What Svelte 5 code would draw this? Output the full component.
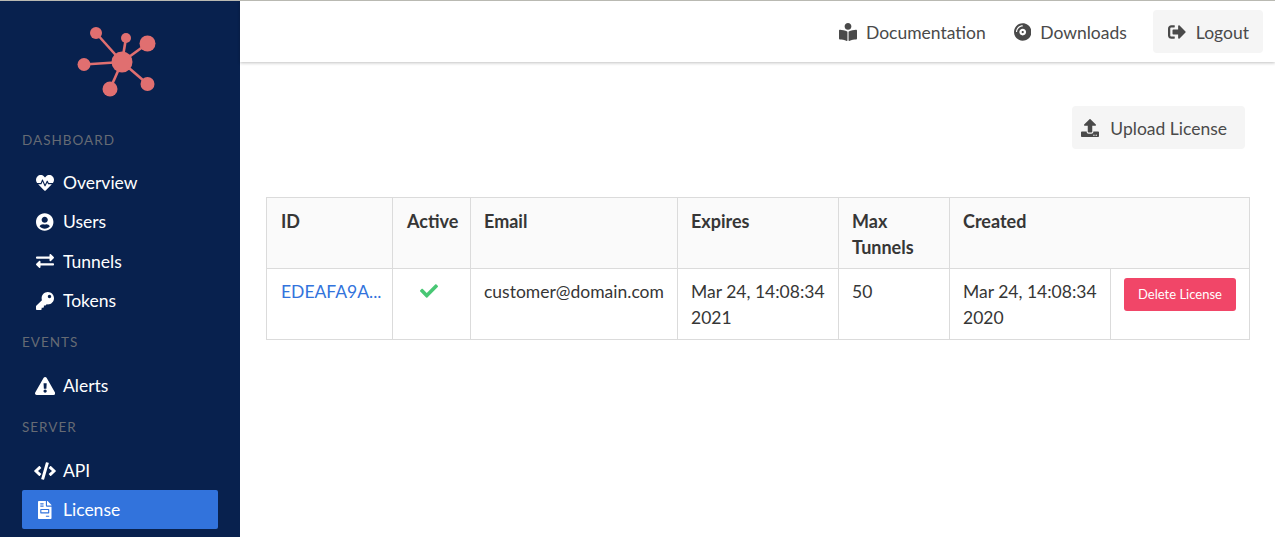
<script lang="ts">
	const icons = {
		heartbeat: [512, 'M320.2 243.8l-49.7 99.4c-6 12.1-23.4 11.7-28.9-.6l-56.9-126.3-30 71.7H60.6l182.5 186.5c7.1 7.3 18.6 7.3 25.7 0L451.4 288H342.3l-22.1-44.2zM473.7 73.9l-2.4-2.5c-51.5-52.6-135.8-52.6-187.4 0L256 100l-27.9-28.5c-51.5-52.7-135.9-52.7-187.4 0l-2.4 2.4C-10.4 123.7-12.5 203 31 256h102.4l35.9-86.2c5.4-12.9 23.6-13.2 29.4-.4l58.2 129.3 49-97.9c5.9-11.8 22.7-11.8 28.6 0l27.6 55.2H481c43.5-53 41.4-132.3-7.3-182.1z'],
		user: [496, 'M248 8C111 8 0 119 0 256s111 248 248 248 248-111 248-248S385 8 248 8zm0 96c48.6 0 88 39.4 88 88s-39.4 88-88 88-88-39.4-88-88 39.4-88 88-88zm0 344c-58.7 0-111.3-26.6-146.5-68.2 18.8-35.4 55.6-59.8 98.5-59.8 2.4 0 4.8.4 7.1 1.1 13 4.2 26.6 6.9 40.9 6.9 14.3 0 28-2.7 40.9-6.9 2.3-.7 4.7-1.1 7.1-1.1 42.9 0 79.7 24.4 98.5 59.8C359.3 421.4 306.7 448 248 448z'],
		exchange: [512, 'M0 168v-16c0-13.255 10.745-24 24-24h360V80c0-21.367 25.899-32.042 40.971-16.971l80 80c9.372 9.373 9.372 24.569 0 33.941l-80 80C409.956 271.982 384 261.456 384 240v-48H24c-13.255 0-24-10.745-24-24zm488 152H128v-48c0-21.314-25.862-32.08-40.971-16.971l-80 80c-9.372 9.373-9.372 24.569 0 33.941l80 80C102.057 463.997 128 453.437 128 432v-48h360c13.255 0 24-10.745 24-24v-16c0-13.255-10.745-24-24-24z'],
		key: [512, 'M512 176.001C512 273.203 433.202 352 336 352c-11.22 0-22.19-1.062-32.827-3.069l-24.012 27.014A23.999 23.999 0 0 1 261.223 384H224v40c0 13.255-10.745 24-24 24h-40v40c0 13.255-10.745 24-24 24H24c-13.255 0-24-10.745-24-24v-78.059c0-6.365 2.529-12.47 7.029-16.971l161.802-161.802C163.108 213.814 160 195.271 160 176 160 78.798 238.797.001 335.999 0 433.488-.001 512 78.511 512 176.001zM336 128c0 26.51 21.49 48 48 48s48-21.49 48-48-21.49-48-48-48-48 21.49-48 48z'],
		alert: [576, 'M569.517 440.013C587.975 472.007 564.806 512 527.94 512H48.054c-36.937 0-59.999-40.055-41.577-71.987L246.423 23.985c18.467-32.009 64.72-31.951 83.154 0l239.94 416.028zM288 354c-25.405 0-46 20.595-46 46s20.595 46 46 46 46-20.595 46-46-20.595-46-46-46zm-43.673-165.346l7.418 136c.347 6.364 5.609 11.346 11.982 11.346h48.546c6.373 0 11.635-4.982 11.982-11.346l7.418-136c.375-6.874-5.098-12.654-11.982-12.654h-63.383c-6.884 0-12.356 5.78-11.981 12.654z'],
		code: [640, 'M278.9 511.5l-61-17.7c-6.4-1.8-10-8.5-8.2-14.9L346.2 8.7c1.8-6.4 8.5-10.1 14.9-8.2l61 17.7c6.4 1.8 10 8.5 8.2 14.9L293.8 503.3c-1.9 6.4-8.5 10.1-14.9 8.2zm-114-112.2l43.5-46.4c4.6-4.9 4.3-12.7-.8-17.2L117 256l90.6-79.7c5.1-4.5 5.5-12.3.8-17.2l-43.5-46.4c-4.5-4.8-12.1-5.1-17-.5L3.8 247.2c-5.1 4.7-5.1 12.8 0 17.5l144.1 135.1c4.9 4.6 12.5 4.4 17-.5zm327.2.6l144.1-135.1c5.1-4.7 5.1-12.8 0-17.5L492.1 112.1c-4.8-4.5-12.4-4.3-17 .5L431.6 159c-4.6 4.9-4.3 12.7.8 17.2L523 256l-90.6 79.7c-5.1 4.5-5.5 12.3-.8 17.2l43.5 46.4c4.5 4.9 12.1 5.1 17 .6z'],
		invoice: [384, 'M288 256H96v64h192v-64zm89-151L279.1 7c-4.5-4.5-10.6-7-17-7H256v128h128v-6.1c0-6.3-2.5-12.4-7-16.9zm-153 31V0H24C10.7 0 0 10.7 0 24v464c0 13.3 10.7 24 24 24h336c13.3 0 24-10.7 24-24V160H248c-13.2 0-24-10.8-24-24zM64 72c0-4.42 3.58-8 8-8h80c4.42 0 8 3.58 8 8v16c0 4.42-3.58 8-8 8H72c-4.42 0-8-3.58-8-8V72zm0 64c0-4.42 3.58-8 8-8h80c4.42 0 8 3.58 8 8v16c0 4.42-3.58 8-8 8H72c-4.42 0-8-3.58-8-8v-16zm256 304c0 4.42-3.58 8-8 8h-80c-4.42 0-8-3.58-8-8v-16c0-4.42 3.58-8 8-8h80c4.42 0 8 3.58 8 8v16zm0-200v96c0 8.84-7.16 16-16 16H80c-8.84 0-16-7.16-16-16v-96c0-8.84 7.16-16 16-16h224c8.84 0 16 7.16 16 16z'],
		book: [512, 'M352 96c0-53.02-42.98-96-96-96s-96 42.98-96 96 42.98 96 96 96 96-42.98 96-96zM233.59 241.1c-59.33-36.32-155.43-46.3-203.79-49.05C13.55 191.13 0 203.51 0 219.14v222.8c0 14.33 11.59 26.28 26.49 27.05 43.66 2.29 131.99 10.68 193.04 41.43 9.37 4.72 20.48-1.71 20.48-11.87V252.56c-.01-4.67-2.32-8.95-6.42-11.46zm248.61-49.05c-48.35 2.74-144.46 12.73-203.78 49.05-4.1 2.51-6.41 6.96-6.41 11.63v245.79c0 10.19 11.14 16.63 20.54 11.9 61.04-30.72 149.32-39.11 192.97-41.4 14.9-.78 26.49-12.73 26.49-27.06V219.14c-.01-15.63-13.56-28.01-29.81-27.09z'],
		disc: [496, 'M248 8C111 8 0 119 0 256s111 248 248 248 248-111 248-248S385 8 248 8zM88 256H56c0-105.9 86.1-192 192-192v32c-88.2 0-160 71.8-160 160zm160 96c-53 0-96-43-96-96s43-96 96-96 96 43 96 96-43 96-96 96zm0-128c-17.7 0-32 14.3-32 32s14.3 32 32 32 32-14.3 32-32-14.3-32-32-32z'],
		logout: [512, 'M497 273L329 441c-15 15-41 4.5-41-17v-96H152c-13.3 0-24-10.7-24-24v-96c0-13.3 10.7-24 24-24h136V88c0-21.4 25.9-32 41-17l168 168c9.3 9.4 9.3 24.6 0 34zM192 436v-40c0-6.6-5.4-12-12-12H96c-17.7 0-32-14.3-32-32V160c0-17.7 14.3-32 32-32h84c6.6 0 12-5.4 12-12V76c0-6.6-5.4-12-12-12H96c-53 0-96 43-96 96v192c0 53 43 96 96 96h84c6.6 0 12-5.4 12-12z'],
		upload: [512, 'M296 384h-80c-13.3 0-24-10.7-24-24V192h-87.7c-17.8 0-26.7-21.5-14.1-34.1L242.3 5.7c7.5-7.5 19.8-7.5 27.3 0l152.2 152.2c12.6 12.6 3.7 34.1-14.1 34.1H320v168c0 13.3-10.7 24-24 24zm216-8v112c0 13.3-10.7 24-24 24H24c-13.3 0-24-10.7-24-24V376c0-13.3 10.7-24 24-24h136v8c0 30.9 25.1 56 56 56h80c30.9 0 56-25.1 56-56v-8h136c13.3 0 24 10.7 24 24zm-124 88c0-11-9-20-20-20s-20 9-20 20 9 20 20 20 20-9 20-20zm64 0c0-11-9-20-20-20s-20 9-20 20 9 20 20 20 20-9 20-20z'],
		check: [512, 'M173.898 439.404l-166.4-166.4c-9.997-9.997-9.997-26.206 0-36.204l36.203-36.204c9.997-9.998 26.207-9.998 36.204 0L192 312.69 432.095 72.596c9.997-9.997 26.207-9.997 36.204 0l36.203 36.204c9.997 9.997 9.997 26.206 0 36.204l-294.4 294.401c-9.998 9.997-26.207 9.997-36.204-.001z']
	};

	const menu = [
		{
			label: 'Dashboard',
			items: [
				{ name: 'Overview', icon: 'heartbeat' },
				{ name: 'Users', icon: 'user' },
				{ name: 'Tunnels', icon: 'exchange' },
				{ name: 'Tokens', icon: 'key' }
			]
		},
		{ label: 'Events', items: [{ name: 'Alerts', icon: 'alert' }] },
		{
			label: 'Server',
			items: [
				{ name: 'API', icon: 'code' },
				{ name: 'License', icon: 'invoice', active: true }
			]
		}
	];

	// spokes of the logo, drawn from the hub at 122,62
	const nodes = [
		[96, 33, 6],
		[126, 38, 5],
		[147.5, 43.5, 8],
		[84, 64.5, 6.5],
		[110, 89, 7.5],
		[147.5, 84, 7]
	];
</script>

{#snippet icon(name: string)}
	<svg class="fa" viewBox="0 0 {icons[name][0]} 512" aria-hidden="true">
		<path fill="currentColor" d={icons[name][1]} />
	</svg>
{/snippet}

<div class="shell">
	<aside class="sidebar">
		<div class="logo">
			<svg width="100" height="80" viewBox="72 22 100 80" aria-label="Logo">
				<g fill="#e06f70" stroke="#e06f70">
					{#each nodes as [x, y, r]}
						<line x1="122" y1="62" x2={x} y2={y} stroke-width="2.6" />
						<circle cx={x} cy={y} {r} stroke="none" />
					{/each}
					<circle cx="122" cy="62" r="10.5" stroke="none" />
				</g>
			</svg>
		</div>
		{#each menu as section}
			<p class="menu-label">{section.label}</p>
			<ul class="menu-list">
				{#each section.items as item}
					<li>
						<a href="#top" class:active={item.active}>
							<span class="menu-icon">{@render icon(item.icon)}</span>
							{item.name}
						</a>
					</li>
				{/each}
			</ul>
		{/each}
	</aside>

	<div class="body">
		<nav class="navbar">
			<a class="nav-link" href="#top"><span class="nav-icon">{@render icon('book')}</span>Documentation</a>
			<a class="nav-link" href="#top"><span class="nav-icon">{@render icon('disc')}</span>Downloads</a>
			<a class="button logout" href="#top"><span class="nav-icon">{@render icon('logout')}</span>Logout</a>
		</nav>

		<main class="content">
			<div class="actions">
				<button class="button upload"><span class="nav-icon">{@render icon('upload')}</span>Upload License</button>
			</div>

			<table>
				<colgroup>
					<col style="width: 126px" />
					<col style="width: 78px" />
					<col style="width: 207px" />
					<col style="width: 161px" />
					<col style="width: 111px" />
					<col style="width: 161px" />
					<col style="width: 139px" />
				</colgroup>
				<thead>
					<tr>
						<th class="tight">ID</th>
						<th class="tight">Active</th>
						<th>Email</th>
						<th>Expires</th>
						<th>Max Tunnels</th>
						<th colspan="2">Created</th>
					</tr>
				</thead>
				<tbody>
					<tr>
						<td class="tight"><a class="id-link" href="#top">EDEAFA9A...</a></td>
						<td class="check">{@render icon('check')}</td>
						<td>customer@domain.com</td>
						<td>Mar 24, 14:08:34 2021</td>
						<td>50</td>
						<td>Mar 24, 14:08:34 2020</td>
						<td class="delete-cell"><button class="delete">Delete License</button></td>
					</tr>
				</tbody>
			</table>
		</main>
	</div>
</div>

<style>
	:global(body) {
		margin: 0;
		background: #fff;
	}

	.shell {
		display: flex;
		height: 537px;
		overflow: hidden;
		border-top: 1px solid #b9b9b2;
		box-sizing: border-box;
		font-family: Lato, 'Liberation Sans', sans-serif;
		font-size: 17.5px;
		color: #4a4a4a;
	}

	.fa {
		display: block;
		height: 18px;
		width: auto;
		max-width: 22px;
	}

	.sidebar {
		flex: 0 0 240px;
		box-sizing: border-box;
		padding: 0 22px;
		background: #08214e;
	}

	.logo {
		height: 128px;
		margin-left: 50px;
		padding-top: 21px;
		box-sizing: border-box;
	}

	.logo svg {
		display: block;
	}

	.menu-label {
		margin: 0.5px 0 12.5px;
		font-size: 13.5px;
		line-height: 21px;
		letter-spacing: 1px;
		text-transform: uppercase;
		color: #666b74;
	}

	.menu-list {
		margin: 0 0 12.17px;
		padding: 0;
		list-style: none;
	}

	.menu-list a {
		display: flex;
		align-items: center;
		height: 39.33px;
		box-sizing: border-box;
		padding-left: 12px;
		border-radius: 2px;
		color: #fff;
		text-decoration: none;
	}

	.menu-list a.active {
		height: 39px;
		background: #3273dc;
	}

	.menu-icon {
		display: flex;
		justify-content: center;
		flex: 0 0 22px;
		margin-right: 7px;
	}

	.body {
		flex: 1;
		min-width: 0;
	}

	.navbar {
		display: flex;
		align-items: center;
		justify-content: flex-end;
		height: 61px;
		padding-right: 12px;
		box-shadow: 0 1px 3px rgba(10, 10, 10, 0.25);
	}

	.nav-link {
		display: flex;
		align-items: center;
		margin-right: 26px;
		padding-top: 2px;
		color: #4a4a4a;
		text-decoration: none;
	}

	.nav-link + .nav-link {
		margin-left: 2px;
	}

	.nav-icon {
		display: flex;
		margin: -2px 9px 0 0;
		color: #4a4a4a;
	}

	.button {
		display: flex;
		align-items: center;
		box-sizing: border-box;
		height: 43px;
		border: 0;
		border-radius: 4px;
		background: #f5f5f5;
		color: #4a4a4a;
		font: inherit;
		text-decoration: none;
	}

	.logout {
		padding: 2px 14px 0 15px;
	}

	.logout .nav-icon {
		margin-right: 10px;
	}

	.content {
		padding: 44px 25px 0 26px;
	}

	.actions {
		display: flex;
		justify-content: flex-end;
		padding-right: 5px;
		margin-bottom: 48px;
	}

	.upload {
		padding: 2px 18px 0 9px;
	}

	.upload .nav-icon {
		margin-right: 11px;
	}

	table {
		width: 983px;
		table-layout: fixed;
		border-collapse: collapse;
		line-height: 26px;
		color: #363636;
	}

	th,
	td {
		box-sizing: border-box;
		padding: 10px 13px 8px;
		border: 1px solid #dbdbdb;
		text-align: left;
		vertical-align: top;
	}

	th {
		background: #fafafa;
		font-size: 18px;
		font-weight: 700;
	}

	.tight {
		padding-left: 14px;
	}

	.id-link {
		color: #3273dc;
		text-decoration: none;
	}

	.check {
		color: #48c774;
		padding-top: 13px;
		padding-left: 27px;
	}

	.delete-cell {
		padding: 9px 13px;
	}

	.delete {
		display: block;
		width: 112px;
		height: 33px;
		padding: 0 0 2px;
		border: 0;
		border-radius: 3px;
		background: #f14668;
		color: #fff;
		font: 13px Lato, 'Liberation Sans', sans-serif;
	}
</style>
